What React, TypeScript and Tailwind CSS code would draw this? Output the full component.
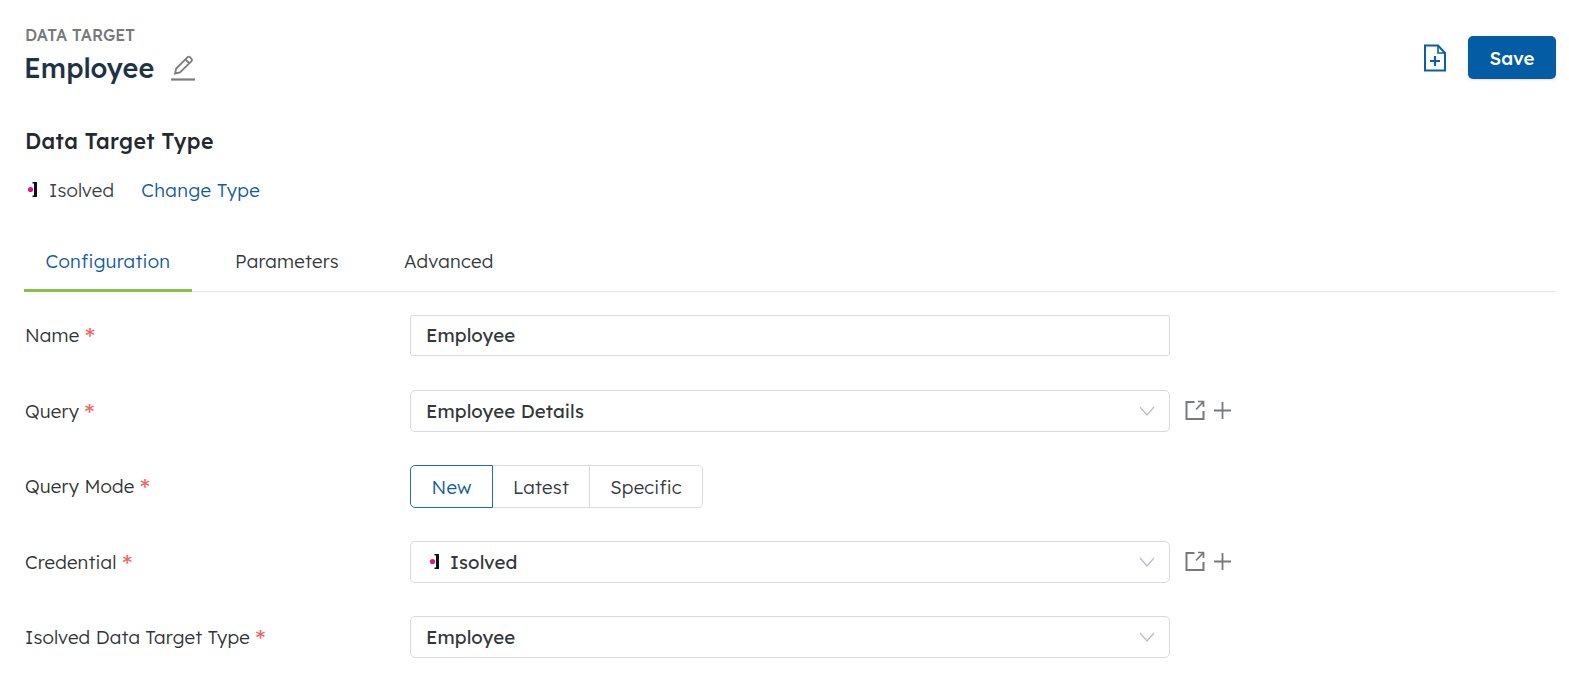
import { ReactNode } from 'react';

function Chevron() {
  return (
    <svg className="w-[16px] h-[10px] text-[#b9bdc2]" viewBox="0 0 16 10" fill="none" stroke="currentColor" strokeWidth="1.2">
      <path d="M1 1l7 8 7-8" />
    </svg>
  );
}

function LinkAdd() {
  return (
    <div className="flex items-center gap-[9px] ml-[15px] -mt-[2px] text-[#77797c]">
      <svg className="w-[20px] h-[20px]" viewBox="0 0 20 20" fill="none" stroke="currentColor" strokeWidth="2">
        <path d="M9.5 2H1.5v17h17v-8" />
        <path d="M11 9.5L18 2.2M13 1.5h5.5V7" strokeWidth="1.7" />
      </svg>
      <svg className="w-[17px] h-[17px]" viewBox="0 0 17 17" fill="none" stroke="currentColor" strokeWidth="1.8">
        <path d="M8.5 0v17M0 8.5h17" />
      </svg>
    </div>
  );
}

function IsolvedLogo() {
  return (
    <svg className="w-[11px] h-[17px] shrink-0 -mt-[2px]" viewBox="0 0 11 17">
      <circle cx="3.5" cy="8.5" r="2.6" fill="#ec0f8c" />
      <path d="M5.5 1H10v15H5.5v-1.5H7V2.5H5.5z" fill="#111" />
    </svg>
  );
}

function Row({ label, className, children }: { label: string; className: string; children: ReactNode }) {
  return (
    <div className={`flex items-center ${className}`}>
      <div className="w-[385px] flex items-center gap-[5px] pb-[1px] text-[18.67px] font-light tracking-[0.17px] text-[#2f3438]">
        {label}
        <span className="text-[28px] leading-[18px] h-[12px] text-[#f4625f] font-light">*</span>
      </div>
      {children}
    </div>
  );
}

function Select({ children }: { children: ReactNode }) {
  return (
    <div className="flex items-center justify-between w-[760px] h-[42px] pl-[15px] pr-[14px] bg-white border border-[#d9dadb] rounded-[5px] text-[18.67px] text-[#33383c] tracking-[0.1px]">
      <div className="flex items-center gap-[10px]">{children}</div>
      <Chevron />
    </div>
  );
}

export default function App() {
  return (
    <div className="h-[692px] bg-white pl-[24px] pr-[13px] overflow-hidden font-['Lexend','Inter','Noto_Sans',sans-serif]">
      <div className="flex justify-between pt-[26px]">
        <div className="pl-[1px]">
          <div className="text-[16px] leading-[18px] font-medium text-[#77797c] uppercase">Data Target</div>
          <div className="flex items-center gap-[16px] mt-[6px]">
            <h1 className="text-[27px] leading-[36px] font-medium text-[#1d3345] -ml-[1px]">Employee</h1>
            <svg className="w-[26px] h-[26px] text-[#7b7c7e]" viewBox="0 0 26 26" fill="none" stroke="currentColor" strokeWidth="1.8">
              <path d="M5 18.5l1.2-5L17.6 2.2a1.6 1.6 0 012.3 0l1.6 1.6a1.6 1.6 0 010 2.3L10 17.4z" />
              <path d="M15.5 4.5l4 4" />
              <path d="M1 24.5h24" strokeWidth="2.2" />
            </svg>
          </div>
        </div>
        <div className="flex items-start gap-[21px] pt-[10px]">
          <svg className="w-[24px] h-[28px] mt-[8px] text-[#0b5ea8]" viewBox="0 0 24 28" fill="none" stroke="currentColor" strokeWidth="2">
            <path d="M2 1.5h13l7 7.5v17.5H2z" />
            <path d="M15 1.5V9h7" strokeWidth="1.6" />
            <path d="M12 12v10M7 17h10" strokeWidth="2.2" />
          </svg>
          <button className="w-[88px] h-[43px] bg-[#045ca4] rounded-[5px] text-white text-[18.67px] font-medium shadow-sm">Save</button>
        </div>
      </div>

      <h2 className="mt-[41px] pl-[1px] text-[21.33px] leading-[28px] font-medium tracking-[0.37px] text-[#23292e]">Data Target Type</h2>

      <div className="flex items-center mt-[23px] pl-[3px] text-[18.67px] leading-[24px] font-light">
        <IsolvedLogo />
        <span className="ml-[11px] text-[#3c4145] tracking-[0.15px]">Isolved</span>
        <span className="ml-[27px] text-[#0f5c9e] tracking-[0.4px]">Change Type</span>
      </div>

      <div className="flex mt-[34px] border-b border-[#e6e7e8] text-[18.67px] font-light text-[#33383c] h-[56px] tracking-[0.22px]">
        <div className="w-[168px] flex justify-center pt-[11px] -mb-px border-b-[3px] border-[#8cc044] text-[#0f5c9e] tracking-[0.3px]">Configuration</div>
        <div className="ml-[43px] pt-[11px]">Parameters</div>
        <div className="ml-[65px] pt-[11px]">Advanced</div>
      </div>

      <Row label="Name" className="mt-[23px] pl-[1px]">
        <div className="flex items-center w-[760px] h-[41px] pl-[15px] pb-[1px] bg-white border border-[#d9dadb] rounded-[3px] text-[18.67px] text-[#33383c] tracking-[0.1px]">Employee</div>
      </Row>
      <Row label="Query" className="mt-[34px] pl-[1px]">
        <Select>Employee Details</Select>
        <LinkAdd />
      </Row>
      <Row label="Query Mode" className="mt-[33px] pl-[1px]">
        <div className="flex h-[43px] text-[18.67px] font-light tracking-[0.2px] text-[#33383c]">
          <div className="w-[83px] flex items-center justify-center border border-[#1f6fb2] rounded-l-[5px] text-[#0f5c9e]">New</div>
          <div className="w-[97px] flex items-center justify-center border-y border-r border-[#d9dadb]">Latest</div>
          <div className="w-[113px] flex items-center justify-center border-y border-r border-[#d9dadb] rounded-r-[5px]">Specific</div>
        </div>
      </Row>
      <Row label="Credential" className="mt-[33px] pl-[1px]">
        <Select>
          <span className="ml-[3px]">
            <IsolvedLogo />
          </span>
          <span>Isolved</span>
        </Select>
        <LinkAdd />
      </Row>
      <Row label="Isolved Data Target Type" className="mt-[33px] pl-[1px]">
        <Select>Employee</Select>
      </Row>
    </div>
  );
}
